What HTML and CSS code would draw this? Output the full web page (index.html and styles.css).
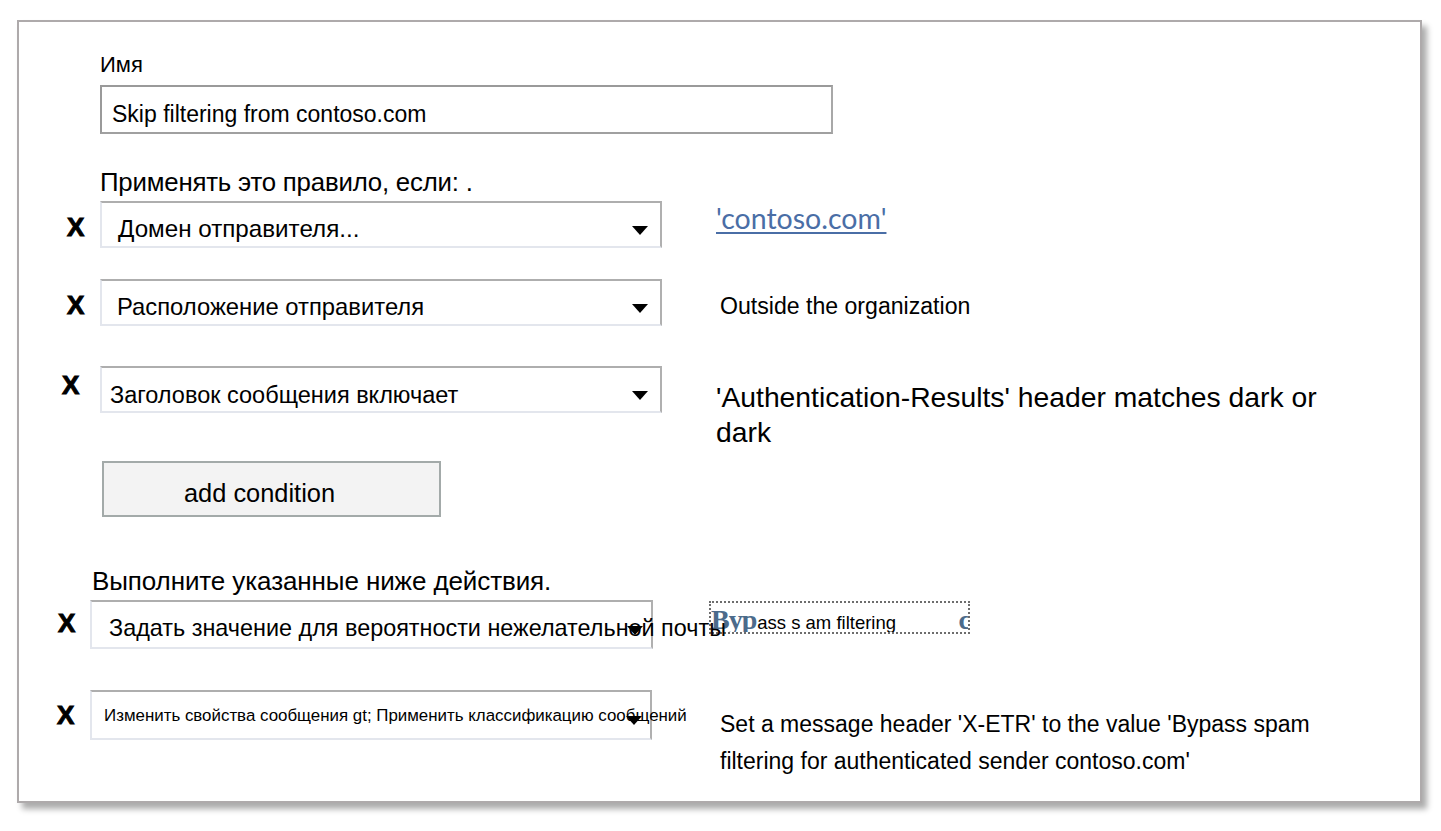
FILE: index.html
```html
<!DOCTYPE html>
<html lang="ru">
<head>
<meta charset="utf-8">
<title>Rule</title>
<link rel="stylesheet" href="styles.css">
</head>
<body>
<div class="frame">
  <div class="label label-name">Имя</div>
  <div class="name-input">Skip filtering from contoso.com</div>

  <div class="label label-cond">Применять это правило, если: .</div>

  <div class="row row1">
    <div class="x">X</div>
    <div class="select sel1"><span class="sel-text">Домен отправителя...</span><span class="arrow"></span></div>
    <a class="link" href="#">'contoso.com'</a>
  </div>

  <div class="row row2">
    <div class="x">X</div>
    <div class="select sel2"><span class="sel-text">Расположение отправителя</span><span class="arrow"></span></div>
    <div class="value value2">Outside the organization</div>
  </div>

  <div class="row row3">
    <div class="x">X</div>
    <div class="select sel3"><span class="sel-text">Заголовок сообщения включает</span><span class="arrow"></span></div>
    <div class="value value3">'Authentication-Results' header matches dark or dark</div>
  </div>

  <div class="btn-wrap"><button class="add-btn">add condition</button></div>

  <div class="label label-act">Выполните указанные ниже действия.</div>

  <div class="row row4">
    <div class="x">X</div>
    <div class="select sel4"><span class="sel-text">Задать значение для вероятности нежелательной почты</span><span class="arrow"></span></div>
    <div class="bypass"><span class="serif">Byp</span><span class="bp-text">ass s am filtering</span><span class="serif tail">c</span></div>
  </div>

  <div class="row row5">
    <div class="x">X</div>
    <div class="select sel5"><span class="sel-text">Изменить свойства сообщения gt; Применить классификацию сообщений</span><span class="arrow"></span></div>
    <div class="value value5">Set a message header 'X-ETR' to the value 'Bypass spam filtering for authenticated sender contoso.com'</div>
  </div>
</div>
</body>
</html>
```
FILE: styles.css
```css
* { box-sizing: border-box; }
html, body { margin: 0; padding: 0; background: #ffffff; }
body {
  font-family: "Liberation Sans", Arial, sans-serif;
  color: #000;
  width: 1441px;
  height: 831px;
  overflow: hidden;
}
.frame {
  margin: 20px 0 0 17px;
  width: 1405px;
  height: 783px;
  border: 2px solid #aeaaab;
  background: #fff;
  box-shadow: 5px 6px 6px rgba(0, 0, 0, 0.33);
  padding-top: 1px;
}
.label {
  font-size: 22px;
  line-height: 26px;
  white-space: nowrap;
}
.label-name { margin: 29px 0 0 81px; }
.name-input {
  margin: 7px 0 0 81px;
  width: 733px;
  height: 49px;
  border: 2px solid #9a9a9a;
  border-right-color: #a8a8a8;
  border-bottom-color: #a0a0a0;
  font-size: 23px;
  padding: 14px 0 0 10px;
  line-height: 26px;
}
.label-cond { margin: 35px 0 0 81px; font-size: 25.8px; letter-spacing: -0.2px; }
.row {
  display: flex;
  align-items: flex-start;
}
.x {
  font-weight: bold;
  font-size: 26px;
  line-height: 26px;
  -webkit-text-stroke: 1px #000;
}
.select {
  position: relative;
  border-top: 2px solid #aeaeae;
  border-right: 2px solid #b0b0b0;
  border-left: 2px solid #e3e6ed;
  border-bottom: 2px solid #e3e6ed;
  background: #fff;
  white-space: nowrap;
  display: flex;
  align-items: center;
}
.sel-text { line-height: 26px; position: relative; z-index: 1; }
.arrow {
  position: absolute;
  right: 12px;
  width: 0; height: 0;
  border-left: 8px solid transparent;
  border-right: 8px solid transparent;
  border-top: 9px solid #000;
  z-index: 2;
}
.row1 { margin-top: 6px; padding-left: 48px; height: 47px; }
.row1 .x { width: 33px; margin-top: 13px; }
.sel1 { width: 562px; height: 47px; padding: 9px 0 0 16px; font-size: 24.2px; }
.sel1 .arrow, .sel2 .arrow, .sel3 .arrow { top: 23px; }
.link {
  margin: 1px 0 0 54px;
  font-family: Lato, "Liberation Sans", sans-serif;
  font-size: 28.5px;
  line-height: 32px;
  color: #4a6ea6;
  text-decoration: underline;
  text-decoration-thickness: 2px;
  text-underline-offset: 3px;
  white-space: nowrap;
}
.row2 { margin-top: 31px; padding-left: 48px; height: 47px; }
.row2 .x { width: 33px; margin-top: 13px; }
.sel2 { width: 562px; height: 47px; padding: 9px 0 0 15px; font-size: 23.8px; }
.value { font-size: 23px; line-height: 26px; }
.value2 { margin: 14px 0 0 58px; font-size: 23.1px; white-space: nowrap; }
.row3 { margin-top: 40px; padding-left: 43px; height: 47px; }
.row3 .x { width: 38px; margin-top: 6px; }
.sel3 { width: 562px; height: 47px; padding: 11px 0 0 8px; font-size: 23.5px; }
.value3 { margin: 14px 0 0 54px; font-size: 28.3px; line-height: 35px; width: 620px; }
.btn-wrap { margin: 48px 0 0 83px; }
.add-btn {
  display: block;
  width: 339px;
  height: 56px;
  background: #f3f3f3;
  border: 2px solid #a3aaa9;
  font-family: "Liberation Sans", Arial, sans-serif;
  font-size: 25.4px;
  color: #000;
  padding: 8px 24px 0 0;
  margin: 0;
}
.label-act { margin: 51px 0 0 73px; font-size: 26px; letter-spacing: -0.1px; }
.row4 { margin-top: 6px; padding-left: 39px; height: 49px; }
.row4 .x { width: 32px; margin-top: 10px; }
.sel4 { width: 563px; height: 49px; padding: 6px 0 0 17px; font-size: 23.4px; overflow: visible; }
.sel4 .arrow, .sel5 .arrow { top: 24px; right: 8px; }
.bypass {
  margin: 1px 0 0 56px;
  width: 261px;
  height: 33px;
  border: 2px dotted #6d6d6d;
  padding-top: 3px;
  display: flex;
  align-items: baseline;
  overflow: hidden;
  white-space: nowrap;
}
.serif {
  font-family: "Liberation Serif", serif;
  font-weight: bold;
  font-size: 28px;
  line-height: 28px;
  color: #4c6b8b;
  letter-spacing: -1px;
}
.bp-text { font-size: 18.5px; line-height: 22px; margin-left: 1px; }
.tail { margin-left: auto; margin-right: -2px; }
.row5 { margin-top: 41px; padding-left: 38px; height: 50px; }
.row5 .x { width: 33px; margin-top: 12px; }
.sel5 { width: 562px; height: 50px; padding: 1px 0 0 12px; font-size: 16.9px; }
.value5 { margin: 16px 0 0 68px; font-size: 23px; line-height: 37px; width: 610px; }
```
